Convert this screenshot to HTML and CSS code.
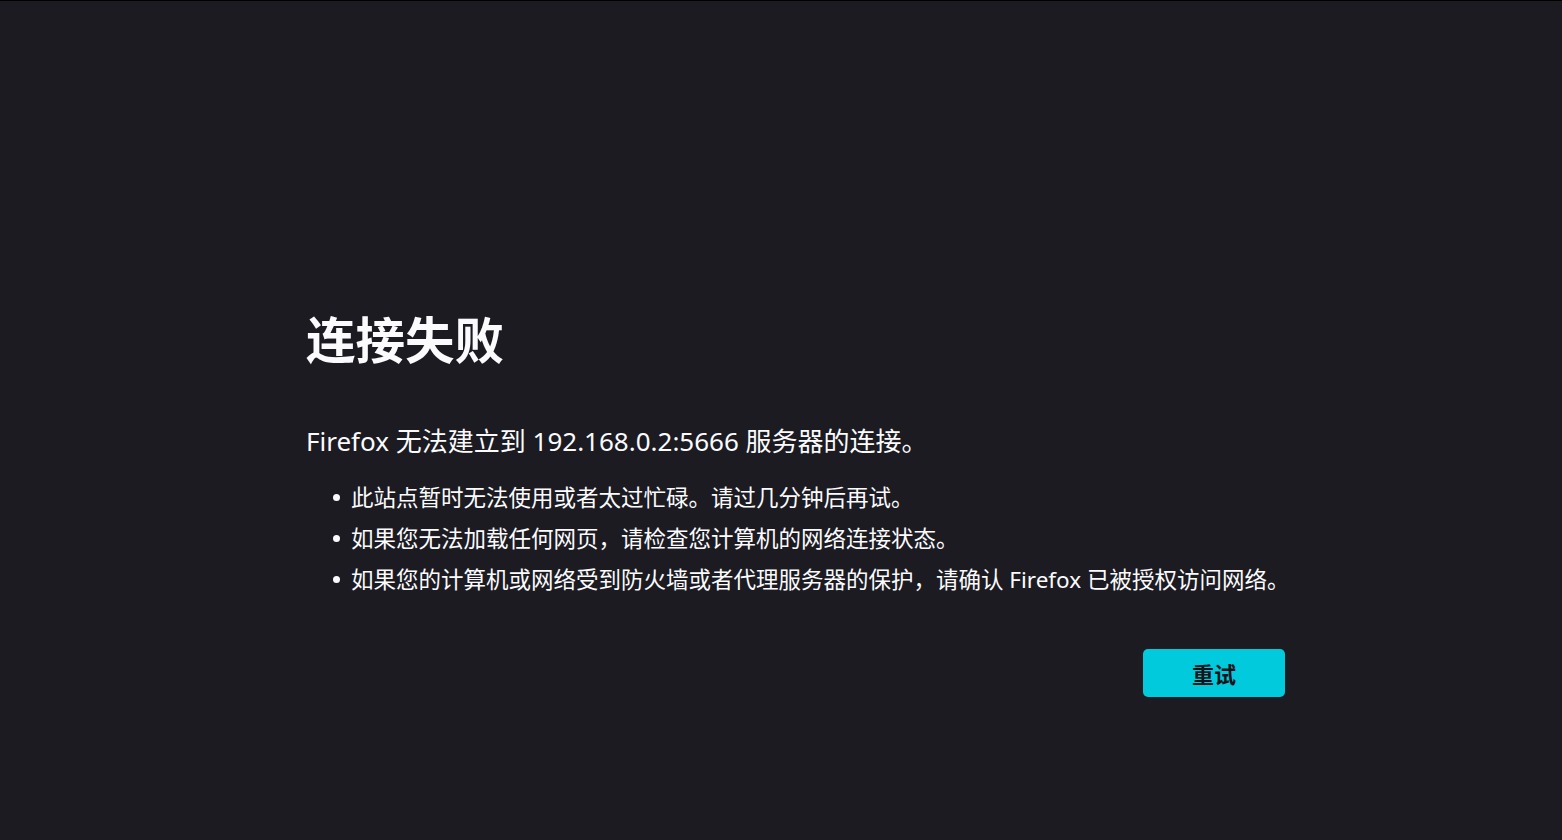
FILE: index.html
```html
<!DOCTYPE html>
<html lang="zh-CN">
<head>
<meta charset="utf-8">
<title>连接失败</title>
<link rel="stylesheet" href="styles.css">
</head>
<body>
<div class="page">
  <main class="container">
    <h1 class="title">连接失败</h1>
    <p class="desc">Firefox 无法建立到 192.168.0.2:5666 服务器的连接。</p>
    <ul class="reasons">
      <li>此站点暂时无法使用或者太过忙碌。请过几分钟后再试。</li>
      <li>如果您无法加载任何网页，请检查您计算机的网络连接状态。</li>
      <li>如果您的计算机或网络受到防火墙或者代理服务器的保护，请确认 Firefox 已被授权访问网络。</li>
    </ul>
    <div class="actions">
      <button class="retry">重试</button>
    </div>
  </main>
</div>
</body>
</html>
```

FILE: styles.css
```css
html, body {
  margin: 0;
  padding: 0;
  height: 100%;
}
body {
  background: #1c1b22;
  color: #fbfbfe;
  font-family: "Noto Sans", "Noto Sans CJK SC", sans-serif;
  border-top: 1px solid #000;
  box-sizing: border-box;
}
.page {
  padding: 306px 0 0 306px;
}
.container {
  width: 979px;
  display: flex;
  flex-direction: column;
}
.title {
  margin: 0;
  font-size: 49.5px;
  font-weight: 700;
  line-height: 62px;
  font-family: "Noto Sans CJK SC", sans-serif;
}
.desc {
  margin: 54px 0 0;
  font-size: 26px;
  line-height: 36px;
}
.reasons {
  margin: 18px 0 0;
  padding-left: 27px;
  list-style: none;
  font-size: 22.5px;
  line-height: 41px;
}
.reasons li {
  white-space: nowrap;
  display: flex;
  align-items: center;
}
.reasons li::before {
  content: "";
  width: 7px;
  height: 7px;
  border-radius: 50%;
  background: #fbfbfe;
  margin-right: 11px;
  flex: none;
}
.actions {
  display: flex;
  justify-content: flex-end;
  margin-top: 49px;
}
.retry {
  width: 142px;
  height: 48px;
  border: none;
  border-radius: 5px;
  background: #00cadb;
  color: #15141a;
  font-family: "Noto Sans CJK SC", sans-serif;
  font-size: 22px;
  font-weight: 700;
}
```
